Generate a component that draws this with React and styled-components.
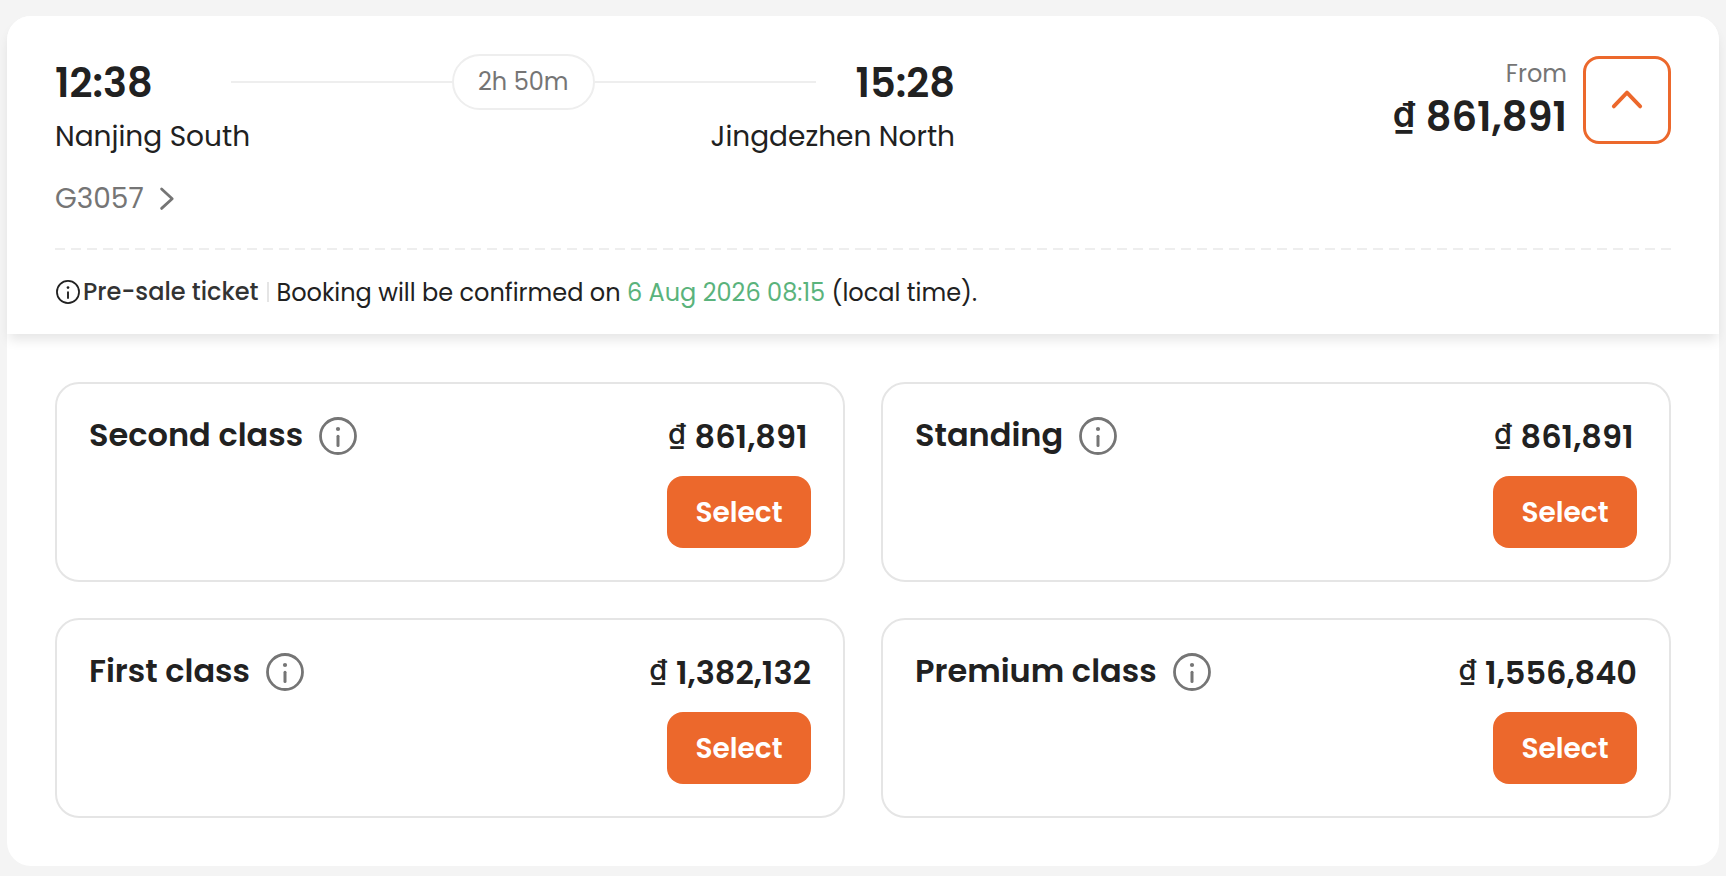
import React, { useState } from "react";
import styled, { createGlobalStyle } from "styled-components";

const GlobalStyle = createGlobalStyle`
  * {
    box-sizing: border-box;
  }
  body {
    margin: 0;
    background: #f4f4f4;
    color: #212121;
    font-family: Poppins, Inter, sans-serif;
  }
  h3, p {
    margin: 0;
  }
  button {
    padding: 0;
    border: 0;
    background: none;
    color: inherit;
    font-family: inherit;
    cursor: pointer;
  }
`;

const Page = styled.main`
  padding: 16px 7px 10px;
`;

const TicketCard = styled.article`
  border-radius: 24px;
  background: #fff;
`;

const Header = styled.header`
  padding: 38px 48px 24px;
  border-radius: 24px 24px 0 0;
  background: #fff;
  box-shadow: 0 8px 12px -2px rgba(0, 0, 0, 0.1);
`;

const Summary = styled.div`
  display: flex;
  justify-content: space-between;
  align-items: flex-start;
  gap: 48px;
`;

const Journey = styled.div`
  flex: 0 1 900px;
`;

const JourneyRow = styled.div`
  display: flex;
  justify-content: space-between;
  align-items: center;
`;

const Time = styled.time`
  min-width: ${(props) => (props.$wide ? "136px" : "0")};
  padding-top: 2px;
  font-size: 40px;
  font-weight: 600;
  line-height: 54px;
`;

const Track = styled.div`
  flex: 1;
  display: flex;
  align-items: center;
  margin: 0 40px;

  &::before,
  &::after {
    content: "";
    flex: 1;
    height: 2px;
    background: #eee;
  }
`;

const Duration = styled.span`
  padding: 0 24px;
  border: 2px solid #eee;
  border-radius: 28px;
  color: #757575;
  font-size: 24px;
  line-height: 52px;
`;

const Station = styled.span`
  margin-top: 5px;
  font-size: 28px;
  line-height: 44px;
`;

const TrainButton = styled.button`
  display: flex;
  align-items: center;
  gap: 15px;
  margin-top: 18px;
  color: #757575;
  font-size: 28px;
  line-height: 44px;
`;

const FareSummary = styled.div`
  display: flex;
  gap: 16px;
  margin-top: 2px;
`;

const FromLabel = styled.p`
  color: #757575;
  font-size: 24px;
  line-height: 36px;
  text-align: right;
`;

const Price = styled.p`
  min-width: 144px;
  font-size: ${(props) => (props.$large ? "40px" : "32px")};
  font-weight: 600;
  line-height: ${(props) => (props.$large ? "50px" : "42px")};
  white-space: nowrap;
`;

/* the dong sign stands on the baseline of the digits, underline included */
const Currency = styled.span`
  margin: 0 1px;
  font-size: ${(props) => (props.$large ? "36px" : "29px")};
  font-weight: ${(props) => (props.$large ? "600" : "500")};
  line-height: 1;
  vertical-align: 4px;
`;

const ToggleButton = styled.button`
  display: flex;
  justify-content: center;
  align-items: center;
  width: 88px;
  height: 88px;
  border: 3px solid #ec682c;
  border-radius: 16px;
  color: #ec682c;
`;

/* two dashed halves that meet in the middle, so both ends close on a dash */
const Divider = styled.hr`
  height: 2px;
  margin: 27px 0 24px;
  border: 0;
  background-image: repeating-linear-gradient(90deg, #eee 0 10px, transparent 10px 16px),
    repeating-linear-gradient(-90deg, #eee 0 10px, transparent 10px 16px);
  background-position: left, right;
  background-size: 50% 2px;
  background-repeat: no-repeat;
`;

const Notice = styled.div`
  display: flex;
  align-items: center;
  height: 36px;
  padding-left: 1px;
  font-size: 24px;
  line-height: 36px;
`;

const NoticeLabel = styled.span`
  margin-left: 3px;
  color: #333;
  font-weight: 500;
`;

const NoticeText = styled.p`
  padding-top: 2px;
`;

const Separator = styled.span`
  width: 2px;
  height: 20px;
  margin: 0 8px;
  background: #e5e5e5;
`;

const ConfirmTime = styled.time`
  color: #5ab37c;
`;

const SeatGrid = styled.section`
  display: grid;
  grid-template-columns: 1fr 1fr;
  gap: 36px;
  padding: 48px;
`;

const SeatCard = styled.div`
  display: flex;
  justify-content: space-between;
  align-items: flex-start;
  padding: 32px;
  border: 2px solid #e5e5e5;
  border-radius: 24px;
`;

const SeatTitle = styled.div`
  display: flex;
  align-items: center;
  gap: 16px;
  height: 40px;
`;

const SeatName = styled.h3`
  padding-bottom: 2px;
  font-size: 32px;
  font-weight: 600;
  line-height: 38px;
`;

const InfoButton = styled.button`
  display: flex;
  color: #757575;
`;

const SeatFare = styled.div`
  display: flex;
  flex-direction: column;
  align-items: flex-end;
  gap: 18px;
`;

const SelectButton = styled.button`
  width: 144px;
  height: 72px;
  padding-top: 2px;
  border-radius: 16px;
  background: #ec682c;
  color: #fff;
  font-size: 28px;
  font-weight: 600;
`;

const InfoIcon = ({ size, stroke }) => (
  <svg width={size} height={size} viewBox="0 0 38 38" fill="none" aria-hidden="true">
    <circle cx="19" cy="19" r="17.5" stroke="currentColor" strokeWidth={stroke} />
    <circle cx="19" cy="12" r="2.1" fill="currentColor" />
    <path d="M19 19.3v9.2" stroke="currentColor" strokeWidth="3" strokeLinecap="round" />
  </svg>
);

const ChevronUp = () => (
  <svg width="32" height="32" viewBox="0 0 32 32" fill="none" aria-hidden="true">
    <path
      d="M2.8 22.4 16 8.6l13.2 13.8"
      stroke="currentColor"
      strokeWidth="3.8"
      strokeLinecap="round"
      strokeLinejoin="round"
    />
  </svg>
);

const ChevronRight = () => (
  <svg width="16" height="24" viewBox="0 0 16 24" fill="none" aria-hidden="true">
    <path
      d="m2.6 2 10.6 9.7L2.6 21.4"
      stroke="currentColor"
      strokeWidth="2.8"
      strokeLinecap="round"
      strokeLinejoin="round"
    />
  </svg>
);

const seats = [
  { name: "Second class", price: "861,891" },
  { name: "Standing", price: "861,891" },
  { name: "First class", price: "1,382,132" },
  { name: "Premium class", price: "1,556,840" },
];

export default function App() {
  const [open, setOpen] = useState(true);

  return (
    <Page>
      <GlobalStyle />
      <TicketCard>
        <Header>
          <Summary>
            <Journey>
              <JourneyRow>
                <Time $wide>12:38</Time>
                <Track>
                  <Duration>2h 50m</Duration>
                </Track>
                <Time>15:28</Time>
              </JourneyRow>
              <JourneyRow>
                <Station>Nanjing South</Station>
                <Station>Jingdezhen North</Station>
              </JourneyRow>
              <TrainButton type="button">
                G3057
                <ChevronRight />
              </TrainButton>
            </Journey>
            <FareSummary>
              <div>
                <FromLabel>From</FromLabel>
                <Price $large>
                  <Currency $large>₫</Currency> 861,891
                </Price>
              </div>
              <ToggleButton
                type="button"
                aria-label="Toggle seat classes"
                aria-expanded={open}
                onClick={() => setOpen(!open)}
              >
                <ChevronUp />
              </ToggleButton>
            </FareSummary>
          </Summary>
          <Divider />
          <Notice>
            <InfoIcon size={24} stroke={2.8} />
            <NoticeLabel>Pre-sale ticket</NoticeLabel>
            <Separator />
            <NoticeText>
              Booking will be confirmed on <ConfirmTime>6 Aug 2026 08:15</ConfirmTime> (local time).
            </NoticeText>
          </Notice>
        </Header>
        {open && (
          <SeatGrid>
            {seats.map((seat) => (
              <SeatCard key={seat.name}>
                <SeatTitle>
                  <SeatName>{seat.name}</SeatName>
                  <InfoButton type="button" aria-label={`About ${seat.name}`}>
                    <InfoIcon size={38} stroke={2.8} />
                  </InfoButton>
                </SeatTitle>
                <SeatFare>
                  <Price>
                    <Currency>₫</Currency> {seat.price}
                  </Price>
                  <SelectButton type="button">Select</SelectButton>
                </SeatFare>
              </SeatCard>
            ))}
          </SeatGrid>
        )}
      </TicketCard>
    </Page>
  );
}
